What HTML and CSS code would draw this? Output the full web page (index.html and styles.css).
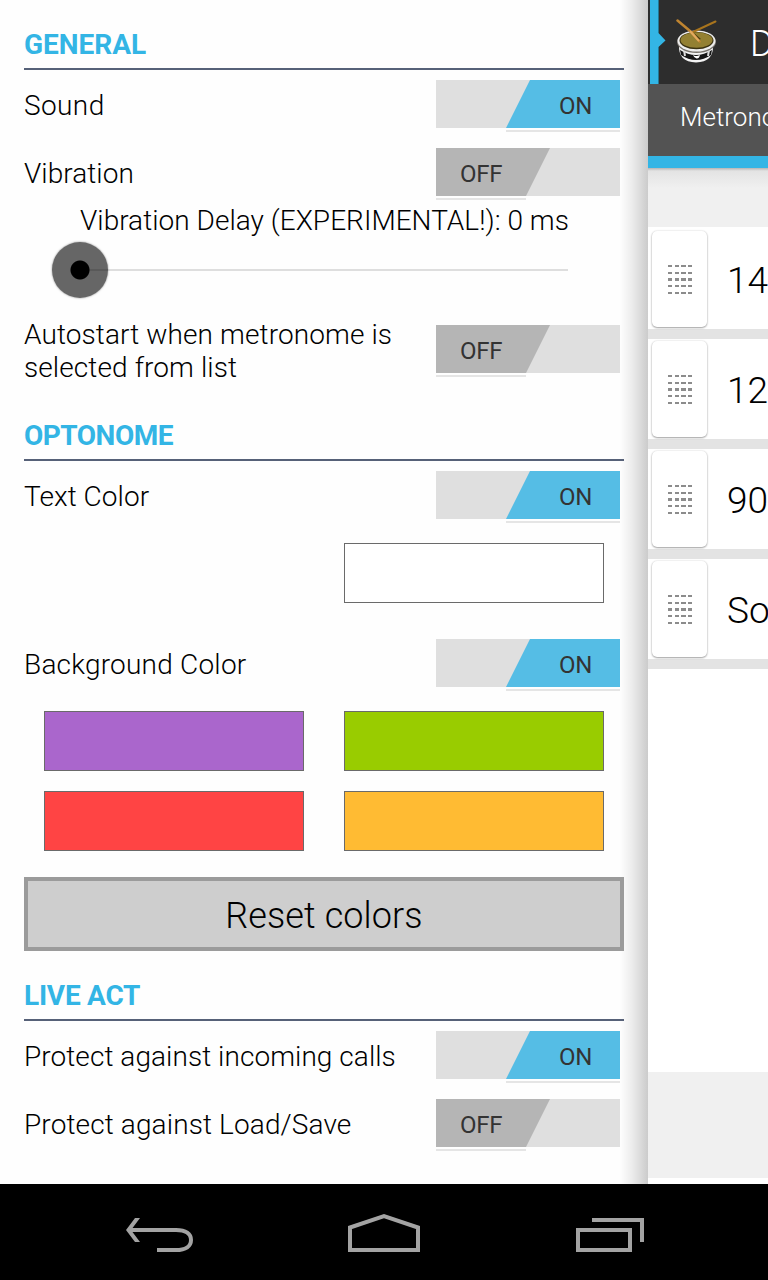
FILE: index.html
```html
<!DOCTYPE html>
<html lang="en">
<head>
  <meta charset="UTF-8">
  <meta name="viewport" content="width=device-width, initial-scale=1.0">
  <title>Metronome settings</title>
  <link rel="stylesheet" href="styles.css">
</head>
<body>
  <div class="screen">
    <div class="drawer">
      <h2>GENERAL</h2>
      <div class="row">
        <span class="label sound">Sound</span>
        <div class="switch on"><div class="thumb">ON</div></div>
      </div>
      <div class="row">
        <span class="label">Vibration</span>
        <div class="switch off"><div class="thumb">OFF</div></div>
      </div>
      <div class="delay">Vibration Delay (EXPERIMENTAL!): 0 ms</div>
      <div class="slider">
        <div class="track"></div>
        <div class="knob"></div>
      </div>
      <div class="row tall">
        <span class="label autostart">Autostart when metronome is selected from list</span>
        <div class="switch off"><div class="thumb">OFF</div></div>
      </div>

      <h2 class="optonome">OPTONOME</h2>
      <div class="row">
        <span class="label">Text Color</span>
        <div class="switch on"><div class="thumb">ON</div></div>
      </div>
      <div class="colors">
        <div></div>
        <div class="color white"></div>
      </div>
      <div class="row">
        <span class="label background">Background Color</span>
        <div class="switch on"><div class="thumb">ON</div></div>
      </div>
      <div class="colors">
        <div class="color purple"></div>
        <div class="color green"></div>
        <div class="color red"></div>
        <div class="color orange"></div>
      </div>
      <button class="reset">Reset colors</button>

      <h2 class="live">LIVE ACT</h2>
      <div class="row">
        <span class="label">Protect against incoming calls</span>
        <div class="switch on"><div class="thumb">ON</div></div>
      </div>
      <div class="row">
        <span class="label loadsave">Protect against Load/Save</span>
        <div class="switch off"><div class="thumb">OFF</div></div>
      </div>
    </div>

    <div class="content">
      <div class="actionbar">
        <svg class="marker" width="18" height="84" viewBox="0 0 18 84">
          <path d="M2 0H10.500V33L17.500 40.500L10.500 47V84H2Z" fill="#33b5e5"/>
          <path d="M10.500 0V33M10.500 47V84" stroke="#247894"/>
        </svg>
        <svg class="drum" width="42" height="46" viewBox="0 0 42 46">
          <path d="M3 27Q2 44 20 44.500Q38 44 37 27Z" fill="#f4f4f4"/>
          <path d="M4 32Q20 42 36 32L35 37Q28 42 20 42Q12 42 5 37Z" fill="#161616"/>
          <path d="M17 37L19 38H21L24 37Q23 41 20.500 40.500Q18 40 17 37Z" fill="#fff"/>
          <path d="M8 32L9 38M33 32L32 38" stroke="#ddd" stroke-width="2"/>
          <ellipse cx="20.500" cy="24" rx="19.500" ry="11" fill="#77736c"/>
          <ellipse cx="20.500" cy="23" rx="19" ry="10.500" fill="#eee"/>
          <ellipse cx="20.500" cy="22.500" rx="17" ry="8.700" fill="#3c3312"/>
          <ellipse cx="20.500" cy="22" rx="16" ry="7.800" fill="#938032"/>
          <path d="M18 15L25 21L22 22Z" fill="#493d13"/>
          <path d="M17 14L39.500 3.500" stroke="#a8741d" stroke-width="2" stroke-linecap="round"/>
          <path d="M1.500 2.500L14 13L23.500 23.500" fill="none" stroke="#bf8430" stroke-width="2.500" stroke-linecap="round"/>
          <path d="M14 13L23 23" stroke="#e3ab60" stroke-width="2"/>
        </svg>
        <span class="title">DRoboMetronome</span>
      </div>
      <div class="tabs">Metronomes</div>
      <div class="list">
        <div class="item"><div class="handle"><i></i></div><span>140</span></div>
        <div class="item"><div class="handle"><i></i></div><span>120</span></div>
        <div class="item"><div class="handle"><i></i></div><span>90</span></div>
        <div class="item"><div class="handle"><i></i></div><span>Song</span></div>
      </div>
      <div class="bottom"></div>
    </div>
  </div>

  <div class="navbar">
    <svg width="768" height="96" viewBox="0 0 768 96" fill="none" stroke="#a3a3a3" stroke-width="4">
      <path d="M130 46H176C186 46 191 50 191 56C191 62 186 66 176 66H157"/>
      <path d="M135 34H140L131 46L140 58H135L126 46Z" fill="#a3a3a3" stroke="none"/>
      <path d="M350 66V43.500L384 32L418 43.500V66Z"/>
      <path d="M578 46H630V66H578Z"/>
      <path d="M592 36H642V58"/>
    </svg>
  </div>
</body>
</html>
```
FILE: styles.css
```css
* { box-sizing: border-box; }
body { margin: 0; width: 768px; height: 1280px; overflow: hidden; background: #000; color: #000; font-family: Roboto, sans-serif; font-weight: 300; }
.screen { display: flex; height: 1184px; overflow: hidden; }

/* settings drawer */
.drawer { width: 648px; height: 1184px; padding: 30px 24px 0; flex-shrink: 0; background: linear-gradient(to right, rgba(0,0,0,0) 620px, rgba(0,0,0,0.07) 632px, rgba(0,0,0,0.2) 648px), #fefefe; }
h2 { margin: 0; height: 40px; border-bottom: 2px solid #566178; color: #33b5e5; font-size: 28px; line-height: 29px; font-weight: 700; }
h2.optonome { margin-top: 30px; letter-spacing: -0.5px; }
h2.live { margin-top: 30px; letter-spacing: -0.25px; }
.row { display: flex; align-items: center; justify-content: space-between; height: 68px; padding-right: 4px; }
.row.tall { height: 84px; }
.label { font-size: 28px; line-height: 33px; padding-top: 2px; letter-spacing: 0.06px; }
.sound { letter-spacing: 0.4px; }
.background { letter-spacing: 0.22px; }
.loadsave { letter-spacing: 0.12px; }
.autostart { width: 380px; padding-top: 4px; letter-spacing: 0.1px; }
.switch { width: 184px; height: 48px; background: #dfdfdf; display: flex; flex-shrink: 0; position: relative; }
.thumb { height: 48px; line-height: 53px; font-size: 24px; font-weight: 400; color: #333; letter-spacing: -0.3px; }
.on { justify-content: flex-end; }
.on .thumb { width: 114px; padding-left: 53px; background: #55bde5; clip-path: polygon(24px 0, 100% 0, 100% 100%, 0 100%); }
.off .thumb { width: 114px; padding-left: 24px; background: #b5b5b5; clip-path: polygon(0 0, 100% 0, 90px 100%, 0 100%); }
.switch::after { content: ""; position: absolute; top: 50px; height: 2px; background: #e5e5e5; }
.on::after { left: 70px; width: 114px; }
.off::after { left: 0; width: 90px; }

.delay { height: 29px; padding-left: 56px; font-size: 28px; line-height: 29px; white-space: nowrap; letter-spacing: 0.03px; }
.slider { height: 72px; display: flex; align-items: center; padding: 0 56px 2px; position: relative; }
.track { width: 100%; height: 2px; background: #dedede; }
.knob { position: absolute; left: 28px; top: 7px; width: 56px; height: 56px; border-radius: 50%; background: radial-gradient(circle, #000 9px, rgba(0,0,0,0.6) 10px); box-shadow: 0 0 2px rgba(0,0,0,0.5); }

.colors { display: grid; grid-template-columns: 260px 260px; gap: 20px 40px; padding: 14px 20px 26px; }
.color { height: 60px; border: 1px solid #6a6a6a; }
.white { background: #fff; }
.purple { background: #aa66cc; }
.green { background: #99cc00; }
.red { background: #ff4444; }
.orange { background: #ffbb33; }
.reset { display: block; width: 600px; height: 74px; border: 4px solid #9b9b9b; background: #cecece; padding: 3px 0 0; color: #000; font: 300 36px Roboto, sans-serif; letter-spacing: 0.1px; }

/* screen behind the drawer */
.content { width: 120px; height: 1184px; overflow: hidden; flex-shrink: 0; display: flex; flex-direction: column; background: #fff; }
.actionbar { height: 84px; background: #2d2d2d; display: flex; color: #fff; flex-shrink: 0; }
.marker { flex-shrink: 0; }
.drum { margin: 18px 0 0 10px; flex-shrink: 0; }
.title { margin-left: 32px; font-size: 36px; line-height: 88px; }
.tabs { height: 84px; flex-shrink: 0; background: #535353; border-bottom: 12px solid #33b5e5; padding-left: 32px; color: #fff; font-size: 26px; line-height: 67px; }
.list { padding-top: 59px; background: linear-gradient(#b5b5b5, #e3e3e3 3px, #f0f0f0 20px); }
.item { display: flex; align-items: center; height: 110px; border-bottom: 10px solid #e3e3e3; background: #fff; padding-left: 4px; font-size: 37px; }
.item:first-child { height: 112px; padding-top: 2px; }
.item span { padding-top: 3px; }
.handle { width: 55px; height: 96px; margin-right: 20px; flex-shrink: 0; border-radius: 5px; background: #fff; box-shadow: 0 1px 2px rgba(0,0,0,0.35), 0 0 2px rgba(0,0,0,0.15); padding: 34px 16px; }
/* grip dashes: white columns laid over grey lines */
.handle i { display: block; width: 24.5px; height: 29px; background: repeating-linear-gradient(to right, transparent 0 4.3px, #fff 4.3px 6.7px), repeating-linear-gradient(#8c8c8c 0 2.2px, #fff 2.2px 6.7px); }
.bottom { height: 106px; margin-top: auto; margin-bottom: 6px; background: #f0f0f0; flex-shrink: 0; }

.navbar { height: 96px; background: #000; }
.navbar svg { display: block; }
```
